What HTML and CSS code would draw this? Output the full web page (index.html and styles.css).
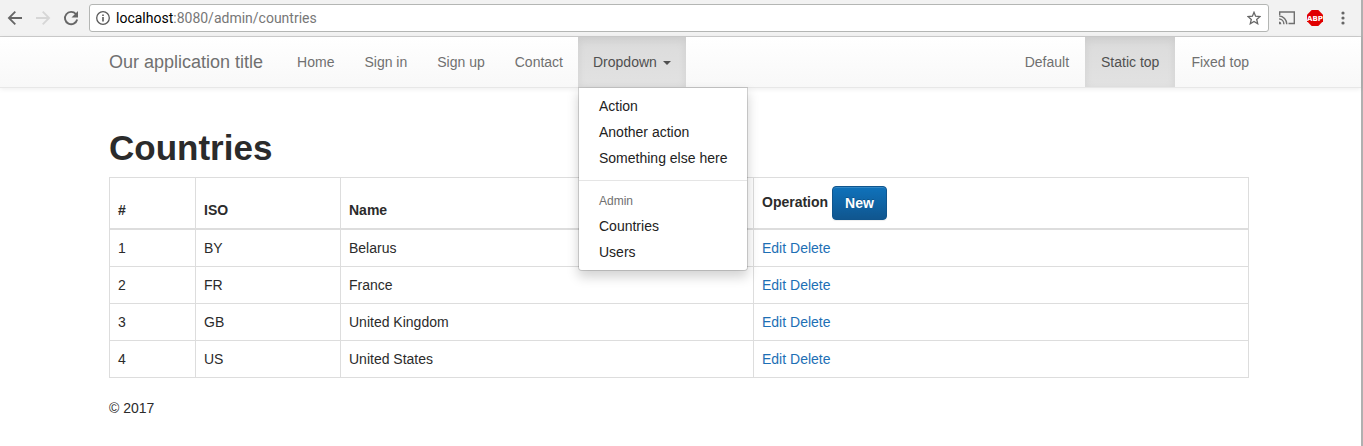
FILE: index.html
```html
<!DOCTYPE html>
<html lang="en">
<head>
<meta charset="utf-8">
<title>Countries</title>
<link rel="stylesheet" href="styles.css">
</head>
<body>
<div class="window">
  <div class="toolbar">
    <div class="tools">
      <button class="tool" type="button" aria-label="Back">
        <svg width="16" height="16" viewBox="0 0 16 16" fill="none" stroke="#666" stroke-width="1.800"><path d="M15 8H2.500M8.300 1.600L1.900 8l6.400 6.400"/></svg>
      </button>
      <button class="tool" type="button" aria-label="Forward" disabled>
        <svg width="16" height="16" viewBox="0 0 16 16" fill="none" stroke="#d6d6d6" stroke-width="1.800"><path d="M1 8h12.500M7.700 1.600L14.100 8l-6.400 6.400"/></svg>
      </button>
      <button class="tool" type="button" aria-label="Reload">
        <svg width="16" height="16" viewBox="0 0 16 16"><path d="M12.900 4A6.200 6.200 0 1 0 14.200 9.600" fill="none" stroke="#666" stroke-width="1.900"/><path d="M15 .9v6.500H8.500z" fill="#666"/></svg>
      </button>
    </div>
    <div class="address">
      <svg width="14" height="14" viewBox="0 0 14 14"><circle cx="7" cy="7" r="6.300" fill="none" stroke="#5a5a5a" stroke-width="1.300"/><path d="M6.200 3.400h1.600v1.500H6.200zM6.200 6h1.600v4.600H6.200z" fill="#5a5a5a"/></svg>
      <span class="url" role="textbox" aria-label="Address"><span class="host">localhost</span>:8080/admin/countries</span>
      <button class="star" type="button" aria-label="Bookmark">
        <svg width="14" height="14" viewBox="0 0 14 14" fill="none" stroke="#666" stroke-width="1.300"><path d="M7 1.300l1.600 3.900 4.400.4-3.300 2.800 1 4.300L7 10.400l-3.700 2.300 1-4.300L1 5.600l4.400-.4z"/></svg>
      </button>
    </div>
    <div class="tools">
      <button class="tool" type="button" aria-label="Cast">
        <svg width="16" height="14" viewBox="0 0 16 14" fill="none" stroke="#707070" stroke-width="1.400"><path d="M.7 4V1h14.600v11.500H9.500M0 4.900a8.300 8.300 0 0 1 7.800 8.300M0 7.900a5.300 5.300 0 0 1 4.900 5.300"/><path d="M0 10.600a2.600 2.600 0 0 1 2.400 2.600H0z" fill="#707070" stroke="none"/></svg>
      </button>
      <button class="tool" type="button" aria-label="Adblock Plus">
        <svg width="16" height="16" viewBox="0 0 16 16"><path d="M4.700 0h6.600L16 4.700v6.600L11.300 16H4.700L0 11.300V4.700z" fill="#e00000"/><text class="abp" x="8" y="11" text-anchor="middle">ABP</text></svg>
      </button>
      <button class="tool menu-button" type="button" aria-label="Menu">
        <svg width="4" height="14" viewBox="0 0 4 14" fill="#666"><circle cx="2" cy="2" r="1.600"/><circle cx="2" cy="7" r="1.600"/><circle cx="2" cy="12" r="1.600"/></svg>
      </button>
    </div>
  </div>

  <nav class="navbar">
    <div class="container navbar-row">
      <a class="brand" href="#">Our application title</a>
      <ul class="nav">
        <li><a href="#">Home</a></li>
        <li><a href="#">Sign in</a></li>
        <li><a href="#">Sign up</a></li>
        <li><a href="#">Contact</a></li>
        <li class="dropdown">
          <a class="active" href="#" aria-haspopup="true" aria-expanded="true">Dropdown <span class="caret"></span></a>
          <ul class="menu">
            <li><a href="#">Action</a></li>
            <li><a href="#">Another action</a></li>
            <li><a href="#">Something else here</a></li>
            <li class="divider"></li>
            <li class="menu-header">Admin</li>
            <li><a href="#">Countries</a></li>
            <li><a href="#">Users</a></li>
          </ul>
        </li>
      </ul>
      <ul class="nav nav-right">
        <li><a href="#">Default</a></li>
        <li><a class="active" href="#">Static top</a></li>
        <li><a href="#">Fixed top</a></li>
      </ul>
    </div>
  </nav>

  <main class="content">
    <div class="container">
      <h1>Countries</h1>
      <table class="table">
        <colgroup><col class="col-id"><col class="col-iso"><col class="col-name"><col></colgroup>
        <thead>
          <tr><th>#</th><th>ISO</th><th>Name</th><th>Operation <button class="btn" type="button">New</button></th></tr>
        </thead>
        <tbody>
          <tr><td>1</td><td>BY</td><td>Belarus</td><td><a href="#">Edit</a> <a href="#">Delete</a></td></tr>
          <tr><td>2</td><td>FR</td><td>France</td><td><a href="#">Edit</a> <a href="#">Delete</a></td></tr>
          <tr><td>3</td><td>GB</td><td>United Kingdom</td><td><a href="#">Edit</a> <a href="#">Delete</a></td></tr>
          <tr><td>4</td><td>US</td><td>United States</td><td><a href="#">Edit</a> <a href="#">Delete</a></td></tr>
        </tbody>
      </table>
      <footer>© 2017</footer>
    </div>
  </main>
</div>
</body>
</html>
```

FILE: styles.css
```css
* {
  box-sizing: border-box;
}

body {
  margin: 0;
  background: #fff;
  color: #2b2b2b;
  font: 14px/20px "Liberation Sans", Arial, sans-serif;
}

a {
  color: #1d6fb5;
  text-decoration: none;
}

ul {
  margin: 0;
  padding: 0;
  list-style: none;
}

button {
  font: inherit;
  cursor: pointer;
}

.window {
  min-height: 100vh;
  border-right: 2px solid #b0b0b0;
}

/* Browser toolbar */
.toolbar {
  display: flex;
  align-items: center;
  gap: 10px;
  height: 37px;
  padding: 0 16px 1px 7px;
  background: #f2f2f2;
  border-bottom: 1px solid #cdcdcd;
}

.tools {
  display: flex;
  align-items: center;
  gap: 12px;
}

.tool,
.star {
  display: flex;
  padding: 0;
  border: 0;
  background: none;
}

.menu-button {
  margin-left: 6px;
}

.address {
  flex: 1;
  display: flex;
  align-items: center;
  gap: 6px;
  height: 28px;
  padding: 0 7px 0 6px;
  background: #fff;
  border: 1px solid #b4b6b4;
  border-radius: 3px;
}

.url {
  flex: 1;
  color: #777;
  font: 14px/20px Roboto, sans-serif;
}

.host {
  color: #000;
}

.abp {
  fill: #fff;
  font: bold 7px "DejaVu Sans", sans-serif;
}

/* Site navigation */
.container {
  width: 100%;
  max-width: 1140px;
  margin: 0 auto;
}

.navbar {
  position: relative;
  z-index: 1;
  padding-right: 3px;
  background: linear-gradient(#fff, #f8f8f8);
  border-bottom: 1px solid #e7e7e7;
  box-shadow: 0 1px 5px rgba(0, 0, 0, 0.075);
}

.navbar-row {
  display: flex;
}

.brand {
  padding: 15px 19px 15px 0;
  color: #707070;
  font-size: 18px;
  text-shadow: 0 1px 0 rgba(255, 255, 255, 0.25);
}

.nav {
  display: flex;
}

.nav-right {
  margin-left: auto;
}

.nav > li > a {
  display: block;
  padding: 15px;
  color: #707070;
}

.nav-right > li > a {
  padding: 15px 16px;
}

.nav-right > li:last-child > a {
  padding-right: 0;
}

.nav > li > .active {
  color: #505050;
  background: linear-gradient(#dbdbdb, #e2e2e2);
  box-shadow: inset 0 3px 9px rgba(0, 0, 0, 0.075);
}

.caret {
  display: inline-block;
  margin-left: 2px;
  vertical-align: middle;
  border-top: 4px solid;
  border-right: 4px solid transparent;
  border-left: 4px solid transparent;
}

.dropdown {
  position: relative;
}

.menu {
  position: absolute;
  top: 100%;
  left: 0;
  min-width: 160px;
  padding: 5px 0;
  background: #fff;
  background-clip: padding-box;
  border: 1px solid rgba(0, 0, 0, 0.15);
  border-radius: 0 0 4px 4px;
  box-shadow: 0 6px 12px rgba(0, 0, 0, 0.175);
  white-space: nowrap;
}

.menu a {
  display: block;
  padding: 3px 20px;
  color: #222;
}

.divider {
  height: 1px;
  margin: 9px 0;
  background: #e5e5e5;
}

.menu-header {
  padding: 3px 20px;
  color: #707070;
  font-size: 12px;
  line-height: 17px;
}

/* Page content */
.content {
  padding: 40px 3px 0 0;
}

h1 {
  margin: 0 0 9px;
  font-size: 35px;
  line-height: 40px;
  font-weight: bold;
}

.table {
  width: 100%;
  margin-bottom: 20px;
  border-collapse: collapse;
}

.col-id {
  width: 86px;
}

.col-iso {
  width: 145px;
}

.col-name {
  width: 413px;
}

.table th,
.table td {
  padding: 8px;
  border: 1px solid #ddd;
  text-align: left;
}

.table th {
  vertical-align: bottom;
  border-bottom-width: 2px;
}

.btn {
  padding: 6px 12px;
  color: #fff;
  font-weight: bold;
  line-height: 20px;
  vertical-align: middle;
  background: linear-gradient(#0f72bb, #10568f);
  border: 1px solid #10558d;
  border-radius: 4px;
  text-shadow: 0 -1px 0 rgba(0, 0, 0, 0.2);
  box-shadow: inset 0 1px 0 rgba(255, 255, 255, 0.15), 0 1px 1px rgba(0, 0, 0, 0.075);
}
```
